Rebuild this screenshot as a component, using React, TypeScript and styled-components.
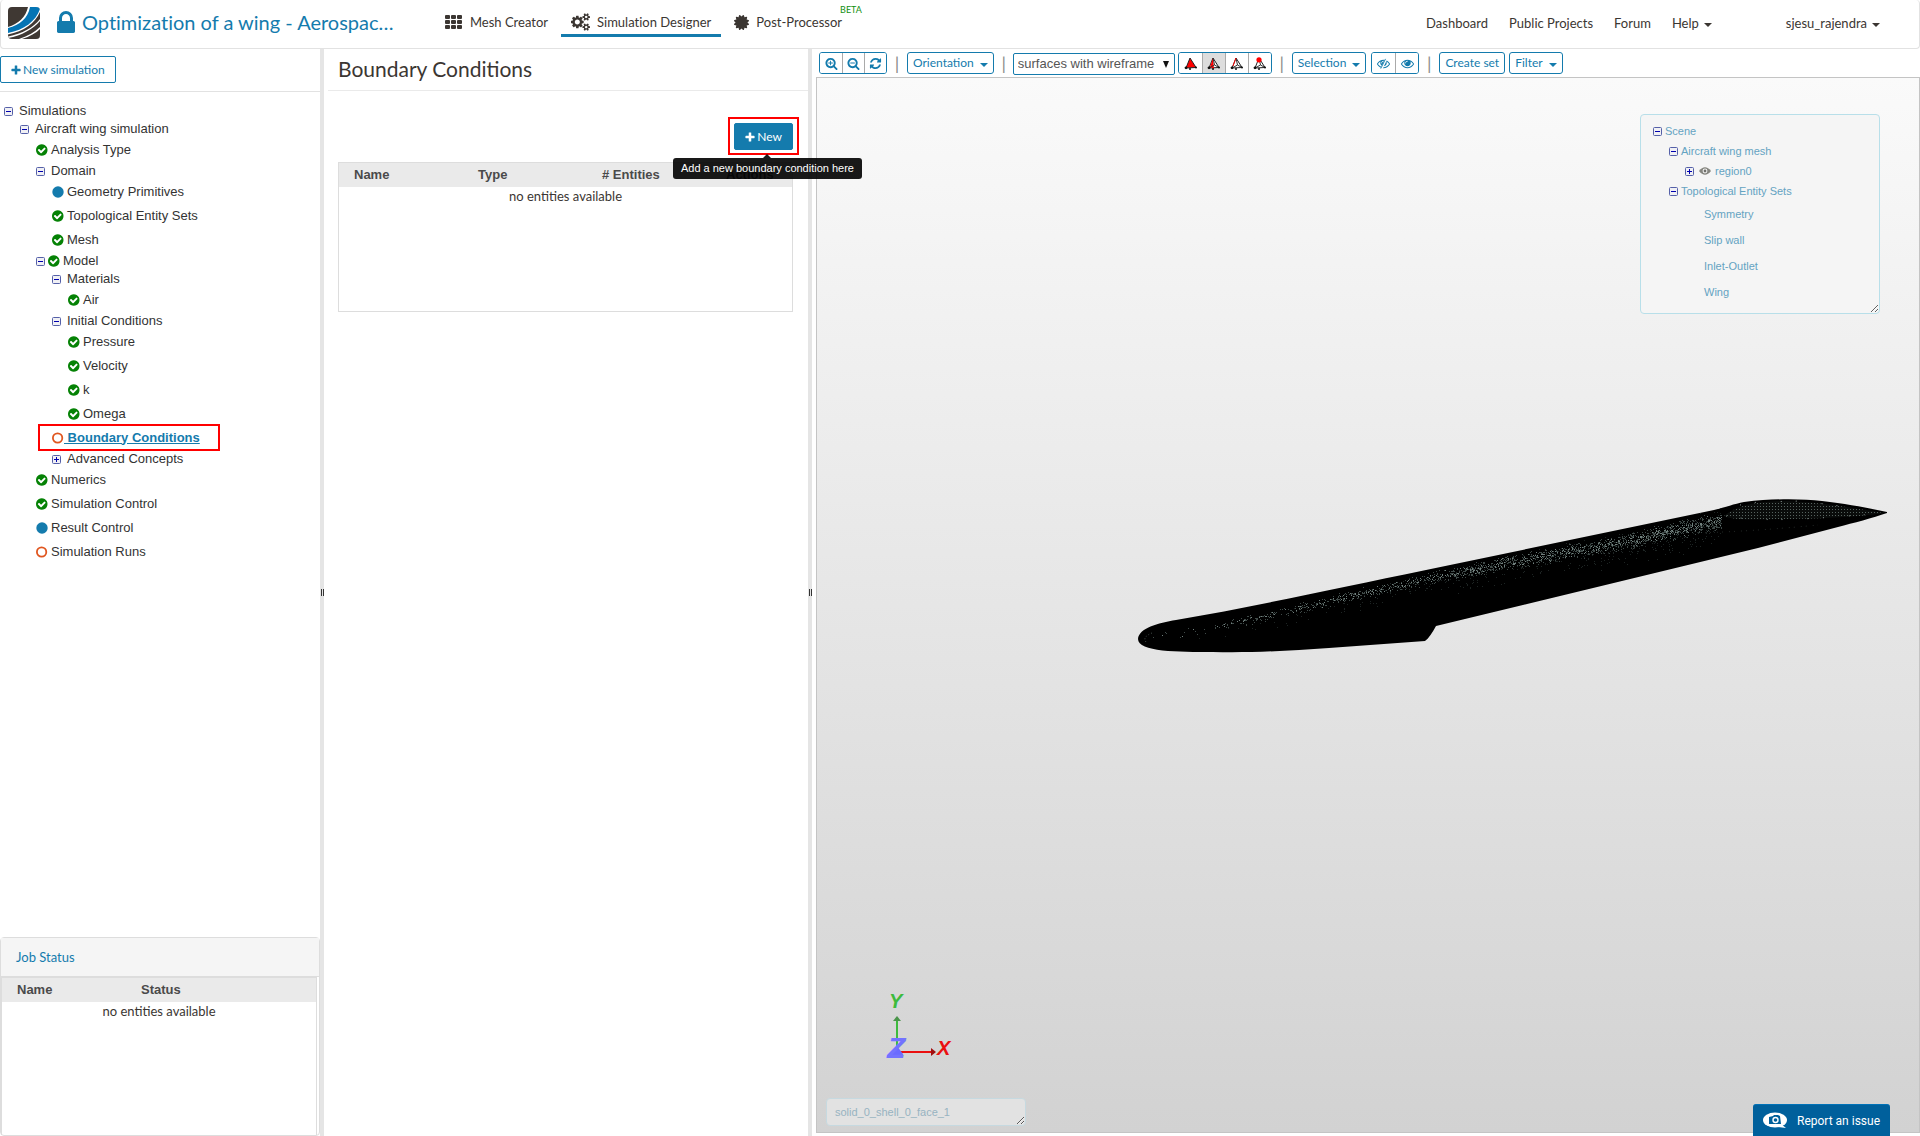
import React from 'react';
import styled, { createGlobalStyle, css } from 'styled-components';
import { FaCertificate } from 'react-icons/fa';

const lato = "Lato, 'Liberation Sans', sans-serif";
const arial = "'Liberation Sans', Arial, sans-serif";
const blue = '#147bad';

const GlobalStyle = createGlobalStyle`
  *, *::before, *::after { box-sizing: border-box; font-variant-ligatures: none; }
  body { margin: 0; background: #fff; color: #3b3632; font: 13px/20px ${lato}; }
  button, select, textarea { margin: 0; }
`;

/* ---------- icons ---------- */

const LENS =
  'm128 32q0-185-131.5-316.5t-316.5-131.5-316.5 131.5-131.5 316.5 131.5 316.5 316.5 131.5 316.5-131.5 131.5-316.5zm512 832q0 53-37.5 90.5t-90.5 37.5q-54 0-90-38l-343-342q-179 124-399 124-143 0-273.5-55.5t-225-150-150-225-55.5-273.5 55.5-273.5 150-225 225-150 273.5-55.5 273.5 55.5 225 150 150 225 55.5 273.5q0 220-124 399l343 343q37 37 37 90z';

const SMALL_COG =
  'v140q0 16-149 31-12 27-30 52 51 113 51 138 0 4-4 7-122 71-124 71-8 0-46-47t-52-68q-20 2-30 2t-30-2q-14 21-52 68t-46 47q-2 0-124-71-4-3-4-7 0-25 51-138-18-25-30-52-149-15-149-31v-140q0-16 149-31 13-29 30-52-51-113-51-138 0-4 4-7 4-2 35-20t59-34 30-16q8 0 46 46.5t52 67.5q20-2 30-2t30 2q51-71 92-112l6-2q4 0 124 70 4 3 4 7 0 25-51 138 17 23 30 52 149 15 149 31z';

const PATHS = {
  zoomIn:
    'M1088 800v64q0 13-9.5 22.5t-22.5 9.5h-224v224q0 13-9.5 22.5t-22.5 9.5h-64q-13 0-22.5-9.5t-9.5-22.5v-224h-224q-13 0-22.5-9.5t-9.5-22.5v-64q0-13 9.5-22.5t22.5-9.5h224v-224q0-13 9.5-22.5t22.5-9.5h64q13 0 22.5 9.5t9.5 22.5v224h224q13 0 22.5 9.5t9.5 22.5z' + LENS,
  zoomOut:
    'M1088 800v64q0 13-9.5 22.5t-22.5 9.5h-576q-13 0-22.5-9.5t-9.5-22.5v-64q0-13 9.5-22.5t22.5-9.5h576q13 0 22.5 9.5t9.5 22.5z' + LENS,
  refresh:
    'M1639 1056q0 5-1 7-64 268-268 434.5t-478 166.5q-146 0-282.5-55t-243.5-157l-129 129q-19 19-45 19t-45-19-19-45v-448q0-26 19-45t45-19h448q26 0 45 19t19 45-19 45l-137 137q71 66 161 102t187 36q134 0 250-65t186-179q11-17 53-117 8-23 30-23h192q13 0 22.5 9.5t9.5 22.5zm25-800v448q0 26-19 45t-45 19h-448q-26 0-45-19t-19-45 19-45l138-138q-148-137-349-137-134 0-250 65t-186 179q-11 17-53 117-8 23-30 23h-199q-13 0-22.5-9.5t-9.5-22.5v-7q65-268 270-434.5t480-166.5q146 0 284 55.5t245 156.5l130-129q19-19 45-19t45 19 19 45z',
  check:
    'M1412 734q0-28-18-46l-91-90q-19-19-45-19t-45 19l-408 407-226-226q-19-19-45-19t-45 19l-91 90q-18 18-18 46 0 27 18 45l362 362q19 19 45 19 27 0 46-19l543-543q18-18 18-45zm252 162q0 209-103 385.5t-279.5 279.5-385.5 103-385.5-103-279.5-279.5-103-385.5 103-385.5 279.5-279.5 385.5-103 385.5 103 279.5 279.5 103 385.5z',
  eye:
    'M1664 960q-152-236-381-353 61 104 61 225 0 185-131.5 316.5t-316.5 131.5-316.5-131.5-131.5-316.5q0-121 61-225-229 117-381 353 133 205 333.5 326.5t434.5 121.5 434.5-121.5 333.5-326.5zm-720-384q0-20-14-34t-34-14q-125 0-214.5 89.5t-89.5 214.5q0 20 14 34t34 14 34-14 14-34q0-86 61-147t147-61q20 0 34-14t14-34zm848 384q0 34-20 69-140 230-376.5 368.5t-499.5 138.5-499.5-139-376.5-368q-20-35-20-69t20-69q140-229 376.5-368t499.5-139 499.5 139 376.5 368q20 35 20 69z',
  plus:
    'M1600 736v192q0 40-28 68t-68 28h-416v416q0 40-28 68t-68 28h-192q-40 0-68-28t-28-68v-416h-416q-40 0-68-28t-28-68v-192q0-40 28-68t68-28h416v-416q0-40 28-68t68-28h192q40 0 68 28t28 68v416h416q40 0 68 28t28 68z',
  lock:
    'M640 768h512v-192q0-106-75-181t-181-75-181 75-75 181v192zm832 96v576q0 40-28 68t-68 28h-960q-40 0-68-28t-28-68v-576q0-40 28-68t68-28h32v-192q0-184 132-316t316-132 316 132 132 316v192h32q40 0 68 28t28 68z',
  cogs:
    'M896 896q0-106-75-181t-181-75-181 75-75 181 75 181 181 75 181-75 75-181zm768 512q0-52-38-90t-90-38-90 38-38 90q0 53 37.5 90.5t90.5 37.5 90.5-37.5 37.5-90.5zm0-1024q0-52-38-90t-90-38-90 38-38 90q0 53 37.5 90.5t90.5 37.5 90.5-37.5 37.5-90.5zm-384 421v185q0 10-7 19.5t-16 10.5l-155 24q-11 35-32 76 34 48 90 115 7 11 7 20 0 12-7 19-23 30-82.5 89.5t-78.5 59.5q-11 0-21-7l-115-90q-37 19-77 31-11 108-23 155-7 24-30 24h-186q-11 0-20-7.5t-10-17.5l-23-153q-34-10-75-31l-118 89q-7 7-20 7-11 0-21-8-144-133-144-160 0-9 7-19 10-14 41-53t47-61q-23-44-35-82l-152-24q-10-1-17-9.5t-7-19.5v-185q0-10 7-19.5t16-10.5l155-24q11-35 32-76-34-48-90-115-7-11-7-20 0-12 7-20 22-30 82-89t79-59q11 0 21 7l115 90q34-18 77-32 11-108 23-154 7-24 30-24h186q11 0 20 7.5t10 17.5l23 153q34 10 75 31l118-89q8-7 20-7 11 0 21 8 144 133 144 160 0 8-7 19-12 16-42 54t-45 60q23 48 34 82l152 23q10 2 17 10.5t7 19.5zm640 533' +
    SMALL_COG + 'm0-1024' + SMALL_COG,
};

const Glyph = ({ name, size, height, box = '0 0 1792 1792', slashed }: {
  name: keyof typeof PATHS; size: number; height?: number; box?: string; slashed?: boolean;
}) => (
  <svg width={size} height={height ?? size} viewBox={box} fill="currentColor" aria-hidden="true">
    <path d={PATHS[name]} fillRule={name === 'cogs' ? 'evenodd' : undefined} />
    {slashed && (
      <>
        <path d="M640 1600L1280 260" stroke="#fff" strokeWidth="300" />
        <path d="M520 1600L1180 260" stroke="currentColor" strokeWidth="120" />
      </>
    )}
  </svg>
);

const GridIcon = () => (
  <svg width="18" height="14" viewBox="0 0 18 14" fill="#3b3632" aria-hidden="true">
    {[0, 5, 10].map((y) =>
      [0, 6, 12].map((x) => <rect key={`${x}-${y}`} x={x} y={y} width="5" height="4" rx="1" />),
    )}
  </svg>
);

const Logo = () => (
  <svg width="32" height="32" viewBox="0 0 32 32" role="img" aria-label="Home">
    <clipPath id="logo-clip"><rect width="32" height="32" rx="4" /></clipPath>
    <g clipPath="url(#logo-clip)">
      <rect width="32" height="32" fill="#3f3833" />
      <path d="M0 20C10 17 18 10 20 0H32V32H0Z" fill="#fff" />
      <path d="M0 21C12 18 20 11 22 0H32V2C28 14 16 23 0 26Z" fill="#0474b4" />
      <path d="M0 27.5C16 24.5 27 16 32 5V12C26 20 14 27 0 29.5Z" fill="#3f3833" />
      <path d="M0 31C14 28.5 25 22 32 14V20C27 25 20 29 11 32H0Z" fill="#3f3833" />
      <path d="M14 32C22 29.5 28 26 32 22V32Z" fill="#3f3833" />
    </g>
  </svg>
);

const Toggle = ({ open }: { open: boolean }) => (
  <svg width="9" height="9" viewBox="0 0 9 9" aria-hidden="true">
    <rect x="0.5" y="0.5" width="8" height="8" rx="1" fill="#f0f0f4" stroke="#5560a8" />
    <path d={open ? 'M2 4.5H7' : 'M2 4.5H7M4.5 2V7'} stroke="#0000b0" />
  </svg>
);

type Status = 'ok' | 'info' | 'todo';

const OkMark = styled.span`
  display: flex;
  color: #058205;
`;

const StatusIcon = ({ status }: { status: Status }) => {
  if (status === 'ok') {
    return <OkMark><Glyph name="check" size={12} box="128 128 1600 1536" /></OkMark>;
  }
  return (
    <svg width="12" height="12" viewBox="0 0 12 12" aria-hidden="true">
      {status === 'info'
        ? <circle cx="6" cy="6" r="5.7" fill={blue} />
        : <circle cx="5.6" cy="6" r="4.7" fill="none" stroke="#e0561f" strokeWidth="1.8" />}
    </svg>
  );
};

type Mode = 'solid' | 'half' | 'edge' | 'vertex';

const MeshModeIcon = ({ mode }: { mode: Mode }) => (
  <svg width="13" height="13" viewBox="0 0 13 13" aria-hidden="true">
    <path d="M6 1L2 11L12 10.5Z" fill={mode === 'solid' ? '#f00' : '#fff'} stroke="#222" />
    {mode === 'half' && <path d="M6 1L3 10L7 12Z" fill="#f00" />}
    {mode !== 'solid' && <path d="M6 1L7.5 8L12 10.5M7.5 8L2 11" fill="none" stroke="#333" />}
    {mode === 'edge' && <path d="M6 1L3 9" stroke="#f00" />}
    {mode === 'vertex' && <circle cx="6" cy="2.8" r="2.6" fill="#f00" />}
    <circle cx="2" cy="10.8" r="1.4" fill="#111" />
    <circle cx="6" cy="12" r="1" fill="#111" />
    <circle cx="12" cy="10.5" r="1" fill="#111" />
  </svg>
);

const RegionEye = () => (
  <svg width="12" height="8" viewBox="0 0 12 8" aria-hidden="true">
    <path d="M0 4Q6-3.5 12 4Q6 11.5 0 4Z" fill="#85857f" />
    <circle cx="6" cy="4" r="2.4" fill="#f5f5f5" />
    <circle cx="6" cy="4" r="1.4" fill="#6f6f6a" />
  </svg>
);

/* ---------- page ---------- */

const Page = styled.div`
  display: flex;
  flex-direction: column;
  min-height: 100vh;
`;

const Header = styled.header`
  display: flex;
  align-items: flex-start;
  height: 49px;
  padding: 0 39px 0 7px;
  border: 1px solid #e2e2e2;
  border-top: 0;
  border-radius: 4px;
`;

const HomeLink = styled.a`
  display: flex;
  padding: 7px 17px 0 0;
`;

const ProjectTitle = styled.a`
  display: flex;
  align-items: center;
  gap: 7px;
  flex: 0 0 378px;
  height: 44px;
  color: ${blue};
  font-size: 20px;
  text-decoration: none;
  white-space: nowrap;
`;

const Tabs = styled.nav`
  display: flex;
  gap: 3px;
  flex: 1;
`;

const Tab = styled.a<{ $active?: boolean }>`
  display: flex;
  align-items: center;
  gap: 7px;
  height: 37px;
  padding: 10px 10px 0;
  border-bottom: 3px solid ${(p) => (p.$active ? blue : 'transparent')};
  color: #3b3632;
  text-decoration: none;
  white-space: nowrap;
`;

const Beta = styled.sup`
  align-self: flex-start;
  margin-left: -15px;
  color: #109010;
  font-size: 9px;
  line-height: 20px;
`;

const Links = styled.nav`
  display: flex;
  align-items: center;
  gap: 21px;
  height: 46px;
`;

const NavLink = styled.a<{ $user?: boolean }>`
  display: flex;
  align-items: center;
  gap: 5px;
  margin-left: ${(p) => (p.$user ? '53px' : '0')};
  color: #3b3632;
  text-decoration: none;
  white-space: nowrap;
`;

const Caret = styled.span`
  border: 4px solid transparent;
  border-top-color: currentColor;
  border-bottom: 0;
  margin-top: 3px;
`;

const Body = styled.main`
  display: flex;
  flex: 1;
`;

const Splitter = styled.div`
  display: flex;
  align-items: center;
  justify-content: center;
  gap: 1px;
  flex: 0 0 4px;
  background: #e5e5e5;
  &::before, &::after {
    content: '';
    width: 1px;
    height: 7px;
    background: #333;
  }
`;

/* ---------- left column ---------- */

const Sidebar = styled.aside`
  display: flex;
  flex-direction: column;
  flex: 0 0 320px;
`;

const SidebarActions = styled.div`
  padding: 7px 0 8px;
  border-bottom: 1px solid #e2e2e2;
`;

const ActionButton = styled.button<{ $primary?: boolean }>`
  display: flex;
  align-items: center;
  gap: 2px;
  height: 27px;
  padding: 0 10px;
  border: 1px solid ${blue};
  border-radius: 2px;
  background: ${(p) => (p.$primary ? blue : '#fff')};
  color: ${(p) => (p.$primary ? '#fff' : blue)};
  font: 12px/20px ${lato};
`;

const Tree = styled.ul`
  flex: 1;
  margin: 0;
  padding: 10px 0 0;
  list-style: none;
  color: #333;
  font: 13px/18px ${arial};
`;

const TreeRow = styled.li<{ $depth: number; $folder?: boolean }>`
  display: flex;
  align-items: center;
  gap: 3px;
  height: ${(p) => (p.$folder ? 18 : 24)}px;
  padding-left: ${(p) => p.$depth * 16 + 4}px;
`;

const TreeLabel = styled.span<{ $wide?: boolean }>`
  padding-left: ${(p) => (p.$wide ? 3 : 0)}px;
`;

const MarkedRow = styled.li`
  display: flex;
  width: 182px;
  height: 27px;
  margin: -2px 0 -1px 38px;
  padding-left: 12px;
  align-items: center;
  border: 2px solid #f00;
`;

const CurrentLink = styled.a`
  color: ${blue};
  font-weight: bold;
  text-decoration: underline;
  white-space: pre;
`;

const JobPanel = styled.section`
  display: flex;
  flex-direction: column;
  height: 199px;
  border: 1px solid #ddd;
  border-radius: 4px;
`;

const JobHeading = styled.h2`
  margin: 0;
  padding: 9px 15px;
  border-bottom: 1px solid #ddd;
  background: #f5f5f5;
  color: ${blue};
  font: 13px/20px ${lato};
`;

/* ---------- tables ---------- */

const TableFrame = styled.div<{ $height?: number; $inset?: boolean }>`
  border: 1px solid #ddd;
  ${(p) => (p.$height ? css`height: ${p.$height}px;` : css`flex: 1;`)}
  ${(p) => p.$inset && css`margin-right: 2px; border-bottom: 0;`}
`;

const Table = styled.table`
  width: 100%;
  border-collapse: collapse;
  table-layout: fixed;
`;

const HeadCell = styled.th`
  width: 124px;
  height: 24px;
  padding: 0 15px;
  background: #eaeaea;
  color: #4a4a4a;
  font: bold 13px/24px ${arial};
  text-align: left;
  white-space: nowrap;
  &:last-child { width: auto; }
`;

const EmptyCell = styled.td`
  padding: 0;
  font: 13px/18px ${lato};
  text-align: center;
`;

const EntityTable = ({ columns }: { columns: string[] }) => (
  <Table>
    <thead><tr>{columns.map((c) => <HeadCell key={c} scope="col">{c}</HeadCell>)}</tr></thead>
    <tbody><tr><EmptyCell colSpan={columns.length}>no entities available</EmptyCell></tr></tbody>
  </Table>
);

/* ---------- middle column ---------- */

const Settings = styled.section`
  flex: 0 0 484px;
  padding-left: 4px;
`;

const SettingsTitle = styled.h1`
  margin: 0;
  padding: 6px 10px 7px;
  border-bottom: 1px solid #eaeaea;
  font: 21px/28px ${lato};
`;

const SettingsContent = styled.div`
  padding: 26px 15px 0 10px;
`;

const MarkedAction = styled.div`
  position: relative;
  width: fit-content;
  margin: 0 -6px 7px auto;
  padding: 4px 4px 3px;
  border: 2px solid #f00;
`;

const Tooltip = styled.div`
  position: absolute;
  top: 39px;
  right: -65px;
  z-index: 2;
  padding: 0 8px;
  border-radius: 3px;
  background: rgba(0, 0, 0, 0.9);
  color: #fff;
  font: 11px/21px ${arial};
  white-space: nowrap;
  &::before {
    content: '';
    position: absolute;
    bottom: 100%;
    left: 50%;
    margin-left: -4px;
    border: 4px solid transparent;
    border-top: 0;
    border-bottom-color: rgba(0, 0, 0, 0.9);
  }
`;

/* ---------- viewer ---------- */

const Viewer = styled.section`
  display: flex;
  flex-direction: column;
  flex: 1;
  min-width: 0;
  padding: 3px 0 3px 4px;
`;

const Toolbar = styled.div`
  display: flex;
  align-items: center;
  height: 22px;
  margin: 0 0 3px 3px;
`;

const Group = styled.div<{ $spaced?: boolean }>`
  display: flex;
  margin-left: ${(p) => (p.$spaced ? 5 : 0)}px;
  border: 1px solid ${blue};
  border-radius: 3px;
  overflow: hidden;
`;

const IconButton = styled.button<{ $width: number; $pressed?: boolean }>`
  display: flex;
  align-items: center;
  justify-content: center;
  width: ${(p) => p.$width}px;
  height: 20px;
  padding: 0;
  border: 0;
  background: ${(p) => (p.$pressed ? '#ddd' : '#fff')};
  color: ${blue};
  & + & { border-left: 1px solid ${(p) => (p.$pressed ? '#aaa' : blue)}; }
`;

const ToolButton = styled.button`
  display: flex;
  align-items: center;
  gap: 6px;
  height: 22px;
  padding: 0 5px;
  border: 1px solid ${blue};
  border-radius: 3px;
  background: #fff;
  color: ${blue};
  font: 12px/18px ${lato};
  white-space: nowrap;
  & + & { margin-left: 4px; }
`;

const Separator = styled.span`
  width: 20px;
  color: #8a8a8a;
  font: 18px/20px ${lato};
  text-align: center;
`;

const SelectWrap = styled.label`
  position: relative;
  margin: 0 3px 0 -1px;
  padding-top: 1px;
  &::after {
    content: '';
    position: absolute;
    right: 6px;
    top: 9px;
    border: 3px solid transparent;
    border-top: 7px solid #111;
    border-bottom: 0;
    pointer-events: none;
  }
`;

const ModeSelect = styled.select`
  display: block;
  width: 162px;
  height: 22px;
  padding: 0 4px;
  appearance: none;
  border: 1px solid ${blue};
  border-radius: 2px;
  background: #fff;
  color: #555;
  font: 13px/18px ${arial};
`;

const Canvas = styled.div`
  position: relative;
  flex: 1;
  overflow: hidden;
  border: 1px solid #c4c4c4;
  background: linear-gradient(#fafafa, #d2d2d2);
`;

const WingDrawing = styled.svg`
  position: absolute;
  top: 421px;
  right: 31px;
`;

const Axes = styled.svg`
  position: absolute;
  left: 64px;
  bottom: 64px;
`;

const ScenePanel = styled.div`
  position: absolute;
  top: 36px;
  right: 39px;
  width: 240px;
  height: 200px;
  overflow: auto;
  resize: both;
  border: 1px solid #b8dfe9;
  border-radius: 4px;
  background: #f5f5f5;
`;

const SceneTree = styled.ul`
  margin: 0;
  padding: 6px 0 0 12px;
  list-style: none;
  color: #64a3c2;
  font: 11px/18px ${arial};
`;

const SceneRow = styled.li<{ $depth: number; $leaf?: boolean }>`
  display: flex;
  align-items: center;
  gap: 3px;
  height: ${(p) => (p.$leaf ? 26 : 20)}px;
  padding-left: ${(p) => (p.$leaf ? 51 : p.$depth * 16)}px;
`;

const EyeMark = styled.span`
  display: flex;
  padding: 0 1px 0 2px;
`;

const Selected = styled.textarea`
  position: absolute;
  left: 9px;
  bottom: 6px;
  width: 200px;
  height: 28px;
  padding: 4px 8px;
  overflow: hidden;
  border: 1px solid #c6d9e0;
  border-radius: 4px;
  background: #e2e2e2;
  color: #97b3c1;
  font: 11px/18px ${arial};
`;

const ReportButton = styled.button`
  position: fixed;
  right: 30px;
  bottom: 0;
  display: flex;
  align-items: center;
  gap: 10px;
  height: 32px;
  padding: 0 10px;
  border: 0;
  border-top: 1px solid #0072b8;
  border-radius: 3px 3px 0 0;
  background: #00609c;
  color: #fff;
  font: 12px/20px Roboto, ${arial};
`;

/* ---------- data ---------- */

interface TreeItem { label: string; depth: number; open?: boolean; status?: Status; current?: boolean }

const simulationTree: TreeItem[] = [
  { label: 'Simulations', depth: 0, open: true },
  { label: 'Aircraft wing simulation', depth: 1, open: true },
  { label: 'Analysis Type', depth: 2, status: 'ok' },
  { label: 'Domain', depth: 2, open: true },
  { label: 'Geometry Primitives', depth: 3, status: 'info' },
  { label: 'Topological Entity Sets', depth: 3, status: 'ok' },
  { label: 'Mesh', depth: 3, status: 'ok' },
  { label: 'Model', depth: 2, open: true, status: 'ok' },
  { label: 'Materials', depth: 3, open: true },
  { label: 'Air', depth: 4, status: 'ok' },
  { label: 'Initial Conditions', depth: 3, open: true },
  { label: 'Pressure', depth: 4, status: 'ok' },
  { label: 'Velocity', depth: 4, status: 'ok' },
  { label: 'k', depth: 4, status: 'ok' },
  { label: 'Omega', depth: 4, status: 'ok' },
  { label: 'Boundary Conditions', depth: 3, status: 'todo', current: true },
  { label: 'Advanced Concepts', depth: 3, open: false },
  { label: 'Numerics', depth: 2, status: 'ok' },
  { label: 'Simulation Control', depth: 2, status: 'ok' },
  { label: 'Result Control', depth: 2, status: 'info' },
  { label: 'Simulation Runs', depth: 2, status: 'todo' },
];

const sceneTree = [
  { label: 'Scene', depth: 0, open: true },
  { label: 'Aircraft wing mesh', depth: 1, open: true },
  { label: 'region0', depth: 2, open: false, eye: true },
  { label: 'Topological Entity Sets', depth: 1, open: true },
  { label: 'Symmetry', depth: 2 },
  { label: 'Slip wall', depth: 2 },
  { label: 'Inlet-Outlet', depth: 2 },
  { label: 'Wing', depth: 2 },
];

const TreeEntry = ({ item }: { item: TreeItem }) => {
  if (item.current) {
    return (
      <MarkedRow>
        <StatusIcon status={item.status!} />
        <CurrentLink href="#boundary">{' ' + item.label}</CurrentLink>
      </MarkedRow>
    );
  }
  const folder = item.open !== undefined;
  return (
    <TreeRow $depth={item.depth} $folder={folder}>
      {folder && <Toggle open={!!item.open} />}
      {item.status && <StatusIcon status={item.status} />}
      <TreeLabel $wide={!item.status}>{item.label}</TreeLabel>
    </TreeRow>
  );
};

/* ---------- drawings ---------- */

const WING =
  'M0 140C1 129 20 124 38 121C120 107 200 89 288 71L576 11C588 8 596 5 606 3C640 -1 665 0 684 2C710 5 730 9 749 13V14C735 19 715 24 700 28L620 49L298 127C294 134 291 139 287 142L191 149C150 152 110 154 75 153C40 153 0 153 0 140Z';

/* Centre line of the lit strip where single mesh faces show through. */
const STRIP = [[10, 139], [58, 131], [135, 114], [257, 86], [365, 63], [492, 41], [584, 20]];

const stripY = (x: number) => {
  const i = Math.max(1, STRIP.findIndex(([px]) => px >= x));
  const [x0, y0] = STRIP[i - 1];
  const [x1, y1] = STRIP[i];
  return y0 + ((x - x0) / (x1 - x0)) * (y1 - y0);
};

const speckle = (count: number, seed: number, power: number, spread: number, drop: number) => {
  let s = seed;
  const next = () => {
    s = (s * 16807) % 2147483647;
    return s / 2147483647;
  };
  let d = '';
  for (let i = 0; i < count; i += 1) {
    const x = Math.round(10 + 573 * Math.pow(next(), power));
    const y = Math.round(stripY(x) + drop + (next() + next() - 1) * spread * (0.4 + x / 900));
    d += `M${x} ${y}h1v1h-1z`;
  }
  return d;
};

const SPECKLES = [
  { d: speckle(1500, 11, 0.5, 10, 1), fill: '#3f4a48' },
  { d: speckle(450, 77, 0.5, 7, 1), fill: '#71807d' },
  { d: speckle(500, 301, 0.4, 20, 8), fill: '#1d2423' },
];

const Wing = () => (
  <WingDrawing width="750" height="158" viewBox="0 0 750 158" role="img" aria-label="Aircraft wing mesh">
    <defs>
      <pattern id="mesh-dots" width="3" height="3" patternUnits="userSpaceOnUse">
        <rect width="3" height="3" fill="#0a0c0b" />
        <rect width="1" height="1" x="1" y="1" fill="#56625e" />
      </pattern>
      <clipPath id="wing-clip"><path d={WING} /></clipPath>
    </defs>
    <path d={WING} fill="#000" />
    <g clipPath="url(#wing-clip)">
      {SPECKLES.map((p) => <path key={p.fill} d={p.d} fill={p.fill} />)}
    </g>
    <path d="M586 17C600 4 630 2 650 2C690 4 720 10 746 14C720 18 680 20 640 20C610 21 595 21 586 17Z" fill="url(#mesh-dots)" />
    <g fill="none" stroke="#7b8a86">
      <path d="M560 34Q620 32 680 26" strokeDasharray="1 6 1 4" opacity="0.3" />
      <path d="M8 143Q4 138 14 134" strokeDasharray="1 2" opacity="0.6" />
    </g>
    <path d="M588 17Q620 23 680 19T746 14M602 6L620 3L664 2L709 8" fill="none" stroke="#b9c9c5" strokeDasharray="1 14 1 25" opacity="0.8" />
  </WingDrawing>
);

const AxisDrawing = () => (
  <Axes width="76" height="76" viewBox="0 0 76 76" role="img" aria-label="Axes" fontFamily={arial} fontWeight="bold" fontStyle="italic">
    <path d="M16 60V26" stroke="#3dbb3d" strokeWidth="2" />
    <path d="M12 29L16 24L20 29Z" fill="#4a944a" />
    <path d="M16 60H52" stroke="#ea1010" strokeWidth="2" />
    <path d="M50 56L55 60L50 64Z" fill="#a01010" />
    <path d="M8 66L16 54L22 62V66Z" fill="#6b6bff" />
    <text x="8" y="16" fontSize="20" fill="#3dbb3d">Y</text>
    <text x="56" y="63" fontSize="20" fill="#ea1010">X</text>
    <text x="6" y="66" fontSize="30" fill="#7373ff">Z</text>
  </Axes>
);

const CameraBubble = () => (
  <svg width="24" height="17" viewBox="0 0 24 17" aria-hidden="true">
    <ellipse cx="12" cy="8" rx="12" ry="7.5" fill="#fff" />
    <path d="M18 12L23 16L15 15Z" fill="#fff" />
    <path d="M6 5L10 4L11 3L15 3L17 4L18 12H6Z" fill="#00609c" />
    <circle cx="12.5" cy="8" r="3.2" fill="#fff" />
    <circle cx="12.5" cy="8" r="1.8" fill="#00609c" />
  </svg>
);

const modes: Mode[] = ['solid', 'half', 'edge', 'vertex'];

export default function App() {
  return (
    <Page>
      <GlobalStyle />
      <Header>
        <HomeLink href="#home"><Logo /></HomeLink>
        <ProjectTitle href="#project">
          <Glyph name="lock" size={18} height={22} box="320 128 1152 1408" />
          Optimization of a wing - Aerospac…
        </ProjectTitle>
        <Tabs>
          <Tab href="#mesh"><GridIcon />Mesh Creator</Tab>
          <Tab href="#designer" $active><Glyph name="cogs" size={19} height={18} box="0 0 1920 1792" />Simulation Designer</Tab>
          <Tab href="#post"><FaCertificate size={15} />Post-Processor</Tab>
          <Beta>BETA</Beta>
        </Tabs>
        <Links>
          <NavLink href="#dashboard">Dashboard</NavLink>
          <NavLink href="#projects">Public Projects</NavLink>
          <NavLink href="#forum">Forum</NavLink>
          <NavLink href="#help">Help<Caret /></NavLink>
          <NavLink href="#user" $user>sjesu_rajendra<Caret /></NavLink>
        </Links>
      </Header>
      <Body>
        <Sidebar>
          <SidebarActions>
            <ActionButton type="button"><Glyph name="plus" size={10} box="128 64 1536 1536" />New simulation</ActionButton>
          </SidebarActions>
          <Tree>{simulationTree.map((item) => <TreeEntry key={item.label} item={item} />)}</Tree>
          <JobPanel>
            <JobHeading>Job Status</JobHeading>
            <TableFrame $inset><EntityTable columns={['Name', 'Status']} /></TableFrame>
          </JobPanel>
        </Sidebar>
        <Splitter />
        <Settings>
          <SettingsTitle>Boundary Conditions</SettingsTitle>
          <SettingsContent>
            <MarkedAction>
              <ActionButton type="button" $primary><Glyph name="plus" size={10} box="128 64 1536 1536" />New</ActionButton>
              <Tooltip role="tooltip">Add a new boundary condition here</Tooltip>
            </MarkedAction>
            <TableFrame $height={150}>
              <EntityTable columns={['Name', 'Type', '# Entities', 'Actions']} />
            </TableFrame>
          </SettingsContent>
        </Settings>
        <Splitter />
        <Viewer>
          <Toolbar>
            <Group>
              <IconButton type="button" aria-label="Zoom in" $width={22}><Glyph name="zoomIn" size={13} /></IconButton>
              <IconButton type="button" aria-label="Zoom out" $width={22}><Glyph name="zoomOut" size={13} /></IconButton>
              <IconButton type="button" aria-label="Reset view" $width={22}><Glyph name="refresh" size={13} /></IconButton>
            </Group>
            <Separator>|</Separator>
            <ToolButton type="button">Orientation<Caret /></ToolButton>
            <Separator>|</Separator>
            <SelectWrap>
              <ModeSelect aria-label="Render mode" defaultValue="wire">
                <option value="wire">surfaces with wireframe</option>
              </ModeSelect>
            </SelectWrap>
            <Group>
              {modes.map((m) => (
                <IconButton key={m} type="button" aria-label={`Pick ${m}`} $width={23} $pressed={m === 'half'}>
                  <MeshModeIcon mode={m} />
                </IconButton>
              ))}
            </Group>
            <Separator>|</Separator>
            <ToolButton type="button">Selection<Caret /></ToolButton>
            <Group $spaced>
              <IconButton type="button" aria-label="Hide selection" $width={23}><Glyph name="eye" size={13} slashed /></IconButton>
              <IconButton type="button" aria-label="Show selection" $width={23}><Glyph name="eye" size={13} /></IconButton>
            </Group>
            <Separator>|</Separator>
            <ToolButton type="button">Create set</ToolButton>
            <ToolButton type="button">Filter<Caret /></ToolButton>
          </Toolbar>
          <Canvas>
            <Wing />
            <AxisDrawing />
            <ScenePanel>
              <SceneTree>
                {sceneTree.map((row) => (
                  <SceneRow key={row.label} $depth={row.depth} $leaf={row.open === undefined}>
                    {row.open !== undefined && <Toggle open={row.open} />}
                    {row.eye && <EyeMark><RegionEye /></EyeMark>}
                    <span>{row.label}</span>
                  </SceneRow>
                ))}
              </SceneTree>
            </ScenePanel>
            <Selected aria-label="Selected entities" readOnly defaultValue="solid_0_shell_0_face_1" />
          </Canvas>
        </Viewer>
      </Body>
      <ReportButton type="button"><CameraBubble />Report an issue</ReportButton>
    </Page>
  );
}
